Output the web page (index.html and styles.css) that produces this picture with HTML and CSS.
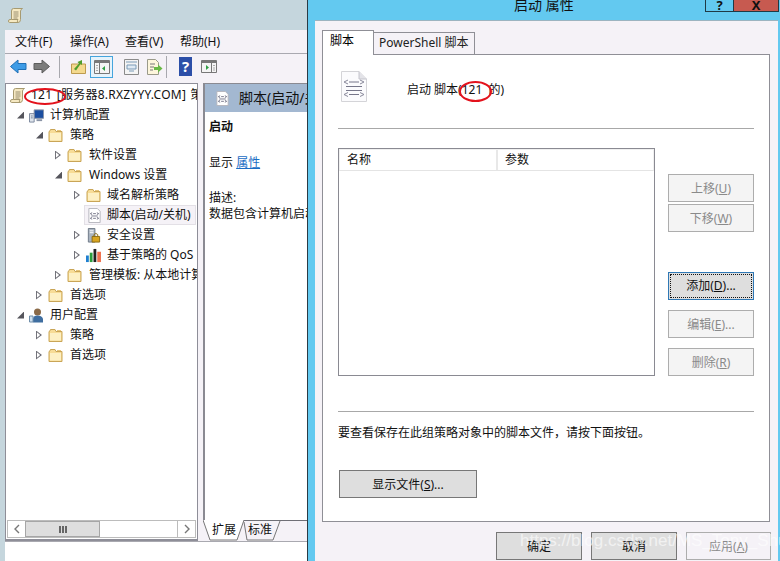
FILE: index.html
```html
<!DOCTYPE html>
<html lang="zh-CN">
<head>
    <meta charset="UTF-8">
    <title>启动 属性</title>
    <link rel="stylesheet" href="styles.css">
</head>
<body>
    <svg class="defs" width="0" height="0">
        <symbol id="folder" viewBox="0 0 15 15">
            <path d="M1 3.500V13.500H14V3.500H8L7 1.500H2.500L1.500 3.500Z" fill="#f7dc96" stroke="#c9a557"/>
            <path d="M2 5H13V12.500H2Z" fill="#fdf0c4"/>
            <path d="M9 2.500H13" stroke="#e6c67c"/>
        </symbol>
        <symbol id="scroll" viewBox="0 0 15 15">
            <path d="M3.500 3Q3.500 .5 5.500 .5H14.500Q13 1 12.500 3V11.500Q12.500 14.500 10 14.500H1.500Q.5 14.500 .5 13Q.5 11.500 2 11.500H3.500Z" fill="#f6e9c2" stroke="#a79a70"/>
            <path d="M5.500 4H10.500M5.500 6H10.500M5.500 8H10.500M5.500 10H9.500" stroke="#9a8f70"/>
            <path d="M3.500 11.500H10Q9 12.500 9.500 14.500" fill="none" stroke="#a79a70"/>
        </symbol>
        <symbol id="script" viewBox="0 0 15 16">
            <path d="M1.500 .5H10.500L13.500 3.500V15.500H1.500Z" fill="#fff" stroke="#b4b4bc"/>
            <path d="M5 5L3 6L5 7M10 5L12 6L10 7M5 10L3 11L5 12M10 10L12 11L10 12" fill="none" stroke="#77778a"/>
            <path d="M6 6H9M4 8.500H11M6 11H9" stroke="#77778a"/>
        </symbol>
    </svg>

    <div class="mmc">
        <div class="mmc-title">
            <svg class="ico-15"><use href="#scroll"/></svg>
        </div>
        <div class="mmc-body">
            <div class="menu">
                <span>文件(F)</span>
                <span>操作(A)</span>
                <span>查看(V)</span>
                <span>帮助(H)</span>
            </div>
            <div class="toolbar">
                <svg class="tool-arrow" width="17" height="15" viewBox="0 0 17 15"><path d="M.5 7.500L8 1V4.500H16V10.500H8V14Z" fill="#3d9be6" stroke="#1f6fb5"/></svg>
                <svg class="tool-arrow" width="17" height="15" viewBox="0 0 17 15"><path d="M16.500 7.500L9 1V4.500H1V10.500H9V14Z" fill="#7c7c7c" stroke="#5c5c5c"/></svg>
                <i class="tool-sep"></i>
                <svg class="tool-up" width="15" height="15" viewBox="0 0 15 15"><path d="M.5 5H14.500V14.500H.5Z" fill="#f4d98e" stroke="#bd9b4f"/><path d="M3 10L8 4.500L6.500 3L11 1V6L9.500 5L5 11.500Z" fill="#4f9e2c"/></svg>
                <span class="tool-on">
                    <svg width="16" height="14" viewBox="0 0 16 14"><path d="M.5 .5H15.500V13.500H.5Z" fill="#f4f4f4" stroke="#777"/><path d="M1 1H15V3H1Z" fill="#777"/><path d="M5.500 3V13" stroke="#777"/><path d="M2 5.500H4M2 8H4M2 10.500H4" stroke="#aaa"/><path d="M11 6V11L8 8.500Z" fill="#2f9e44"/></svg>
                </span>
                <svg class="tool-page" width="15" height="16" viewBox="0 0 15 16"><path d="M.5 .5H14.500V15.500H.5Z" fill="#f4f4f4" stroke="#8a8a8a"/><path d="M2 3H13M3 6H12V10H3ZM5 12H10" stroke="#7a9bb8" fill="#dfeaf4"/></svg>
                <svg class="tool-export" width="16" height="16" viewBox="0 0 16 16"><path d="M.5 .5H8.500L11.500 3.500V15.500H.5Z" fill="#fdf6dc" stroke="#9a9a8a"/><path d="M3 5H8M3 8H7M3 11H6" stroke="#777"/><path d="M7 8H11V5.500L15.500 9.500L11 13.500V11H7Z" fill="#69b945"/></svg>
                <i class="tool-sep"></i>
                <svg class="tool-help" width="13" height="19" viewBox="0 0 13 19"><path d="M0 0H13V19H0Z" fill="#2c4fa8"/><text x="6.500" y="15" class="help-mark">?</text></svg>
                <svg class="tool-pane" width="16" height="13" viewBox="0 0 16 13"><path d="M.5 .5H15.500V12.500H.5Z" fill="#f4f4f4" stroke="#777"/><path d="M1 1H15V3H1Z" fill="#777"/><path d="M10.500 3V12" stroke="#777"/><path d="M12 5.500H14M12 8H14M12 10H14" stroke="#aaa"/><path d="M5 5V10L8 7.500Z" fill="#2f9e44"/></svg>
            </div>
            <div class="panes">
                <div class="tree-wrap">
                    <div class="tree">
                        <div class="row root"><svg class="ico-15"><use href="#scroll"/></svg><span>121 [服务器8.RXZYYY.COM] 策略</span></div>
                        <div class="row l0"><i class="open"></i>
                            <svg class="ico-15" viewBox="0 0 16 15"><path d="M5.500 1.500H15.500V10.500H5.500Z" fill="#1c4fa0" stroke="#8a94a6"/><path d="M8 12.500H14" stroke="#8a94a6" stroke-width="2"/><path d="M.5 5.500H5.500V14.500H.5Z" fill="#dfe5ec" stroke="#78849a"/><path d="M2 8H4M2 10H4" stroke="#78849a"/></svg>
                            <span>计算机配置</span></div>
                        <div class="row l1"><i class="open"></i><svg class="ico-15"><use href="#folder"/></svg><span>策略</span></div>
                        <div class="row l2"><i class="shut"></i><svg class="ico-15"><use href="#folder"/></svg><span>软件设置</span></div>
                        <div class="row l2"><i class="open"></i><svg class="ico-15"><use href="#folder"/></svg><span>Windows 设置</span></div>
                        <div class="row l3"><i class="shut"></i><svg class="ico-15"><use href="#folder"/></svg><span>域名解析策略</span></div>
                        <div class="row l3"><i></i><div class="picked"><svg class="ico-15"><use href="#script"/></svg><span>脚本(启动/关机)</span></div></div>
                        <div class="row l3"><i class="shut"></i>
                            <svg class="ico-15" viewBox="0 0 15 16"><path d="M2 .5H9V15H2Z" fill="#aab4c0" stroke="#6d7785"/><path d="M3.500 3H7.500M3.500 5H7.500" stroke="#fff"/><path d="M6 9H14V15H6Z" fill="#d9a520" stroke="#8a6a10"/><path d="M8 9V7Q10 4.500 12 7V9" fill="none" stroke="#8a6a10"/></svg>
                            <span>安全设置</span></div>
                        <div class="row l3"><i class="shut"></i>
                            <svg class="ico-15" viewBox="0 0 16 16"><path d="M0 8H3V15H0Z" fill="#1f7fd0"/><path d="M4 5H7V15H4Z" fill="#2c9e3c"/><path d="M8 1H11V15H8Z" fill="#222"/><path d="M12 4H16V15H12Z" fill="#ef7350"/></svg>
                            <span>基于策略的 QoS</span></div>
                        <div class="row l2"><i class="shut"></i><svg class="ico-15"><use href="#folder"/></svg><span>管理模板: 从本地计算机</span></div>
                        <div class="row l1"><i class="shut"></i><svg class="ico-15"><use href="#folder"/></svg><span>首选项</span></div>
                        <div class="row l0"><i class="open"></i>
                            <svg class="ico-15" viewBox="0 0 15 15"><circle cx="8.500" cy="4" r="3.500" fill="#8a6a48"/><path d="M4 14.500V10.500Q4.500 7.500 8.500 7.500T14 10.500V14.500Z" fill="#3f6ea0"/><path d="M.5 8V14H4V8Z" fill="#cfe0ef" stroke="#6f8eaa"/></svg>
                            <span>用户配置</span></div>
                        <div class="row l1"><i class="shut"></i><svg class="ico-15"><use href="#folder"/></svg><span>策略</span></div>
                        <div class="row l1"><i class="shut"></i><svg class="ico-15"><use href="#folder"/></svg><span>首选项</span></div>
                    </div>
                    <div class="hscroll">
                        <span class="sb-btn">
                            <svg width="6" height="10" viewBox="0 0 6 10"><path d="M5 1L1 5L5 9" fill="none" stroke="#777" stroke-width="1.400"/></svg>
                        </span>
                        <span class="sb-thumb"><b></b><b></b><b></b></span>
                        <span class="sb-track"></span>
                        <span class="sb-btn">
                            <svg width="6" height="10" viewBox="0 0 6 10"><path d="M1 1L5 5L1 9" fill="none" stroke="#777" stroke-width="1.400"/></svg>
                        </span>
                    </div>
                </div>
                <div class="detail-wrap">
                    <div class="detail">
                        <div class="detail-head"><svg class="ico-15"><use href="#script"/></svg><span>脚本(启动/关机)</span></div>
                        <div class="detail-body">
                            <p class="strong">启动</p>
                            <p class="show">显示 <a>属性</a></p>
                            <p class="desc">描述:</p>
                            <p>数据包含计算机启动脚本</p>
                        </div>
                    </div>
                    <div class="view-tabs">
                        <svg class="view-shape" width="104" height="21" viewBox="0 0 104 21">
                            <path d="M41 .5H104" stroke="#6f6f76"/>
                            <path d="M41 2L44 20H70L77 1" fill="none" stroke="#777"/>
                            <path d="M0 0L7 20H34L41 0Z" fill="#fff"/>
                            <path d="M0 0L7 20H34L41 0" fill="none" stroke="#777"/>
                        </svg>
                        <span>扩展</span>
                        <span>标准</span>
                    </div>
                </div>
            </div>
            <div class="status"></div>
        </div>
    </div>

    <div class="dialog">
        <div class="dlg-title">
            <span class="dlg-name">启动 属性</span>
            <span class="cap-help">?</span>
            <span class="cap-close">X</span>
        </div>
        <div class="dlg-client">
            <div class="tabs">
                <span class="tab active">脚本</span>
                <span class="tab">PowerShell 脚本</span>
            </div>
            <div class="page">
                <div class="page-head">
                    <svg width="26" height="31" viewBox="0 0 26 31"><path d="M.5 .5H18L25.500 8V30.500H.5Z" fill="#fbfbfd" stroke="#d4d4d8"/><path d="M18 .5V8H25.500" fill="#e3e3e8" stroke="#c4c4cc"/><path d="M7 9L3 11L7 13M19 9L23 11L19 13M7 21.500L3 23.500L7 25.500M19 21.500L23 23.500L19 25.500" fill="none" stroke="#8a8a9c"/><path d="M8 11H18M5 15.500H21M5 19.500H21M8 23.500H18" stroke="#77778a"/></svg>
                    <span class="head-text">启动 脚本(121 &nbsp;的)</span>
                </div>
                <div class="rule"></div>
                <div class="page-main">
                    <div class="list">
                        <div class="list-head">
                            <span class="col-name">名称</span>
                            <span>参数</span>
                        </div>
                    </div>
                    <div class="side">
                        <button class="off">上移(<u>U</u>)</button>
                        <button class="off">下移(<u>W</u>)</button>
                        <button class="focus gap-add"><span>添加(<u>D</u>)...</span></button>
                        <button class="off gap-btn">编辑(<u>E</u>)...</button>
                        <button class="off gap-btn">删除(<u>R</u>)</button>
                    </div>
                </div>
                <div class="rule rule-low"></div>
                <p class="note">要查看保存在此组策略对象中的脚本文件，请按下面按钮。</p>
                <button class="show-files">显示文件(<u>S</u>)...</button>
            </div>
            <div class="dlg-foot">
                <button>确定</button>
                <button>取消</button>
                <button class="off">应用(<u>A</u>)</button>
            </div>
        </div>
    </div>

    <i class="ring ring-tree"></i>
    <i class="ring ring-head"></i>
    <span class="watermark">https://blog.csdn.net/MS_Tony_Shu</span>
</body>
</html>
```

FILE: styles.css
```css
* { box-sizing: border-box; }
html, body { margin: 0; height: 100%; }
body { position: relative; width: 780px; height: 561px; overflow: hidden; background: #c5d6dd; color: #111; font: 12px/20px "Noto Sans", "Noto Sans CJK SC", sans-serif; }
p { margin: 0; }
i { display: block; font-style: normal; }
.defs { position: absolute; }
.ico-15 { width: 15px; height: 15px; flex: none; }

.mmc { position: absolute; left: 0; top: 0; width: 308px; height: 561px; border-right: 1px solid #2b3a44; display: flex; flex-direction: column; }
.mmc-title { height: 30px; flex: none; padding: 8px 0 0 8px; }
.mmc-body { flex: 1; margin-left: 5px; display: flex; flex-direction: column; background: #f5f2f7; min-height: 0; }

.menu { height: 24px; flex: none; display: flex; padding-left: 10px; align-items: center; border-bottom: 1px solid #a9a9b0; }
.menu span { width: 55px; }

.toolbar { height: 29px; flex: none; display: flex; align-items: center; padding: 0 0 4px 5px; }
.tool-arrow { margin-right: 6px; }
.tool-sep { width: 1px; height: 22px; background: #a8a8ae; margin-left: 3px; }
.tool-up { margin-left: 11px; }
.tool-on { width: 23px; height: 22px; margin-left: 4px; display: flex; align-items: center; justify-content: center; background: #e6f3fb; border: 1px solid #45a5dd; }
.tool-page { margin-left: 11px; }
.tool-export { margin-left: 8px; }
.tool-help { margin-left: 12px; }
.tool-pane { margin-left: 9px; }
.help-mark { fill: #fff; font-size: 15px; font-weight: bold; text-anchor: middle; }

.panes { flex: 1; display: flex; min-height: 0; }
.tree-wrap { width: 193px; flex: none; background: #fff; border: 1px solid #8e8e98; border-bottom-width: 2px; display: flex; flex-direction: column; }
.tree { flex: 1; padding-top: 1px; overflow: hidden; }
.row { height: 20px; display: flex; align-items: center; white-space: nowrap; overflow: hidden; }
.row i { width: 9px; height: 9px; flex: none; margin-right: 3px; }
.row svg { margin-right: 7px; }
.row i.open { width: 7px; height: 7px; margin-right: 5px; }
.row i.shut { width: 6px; margin-right: 6px; }
.row.root { padding-left: 4px; word-spacing: 1px; letter-spacing: .25px; }
.row.root svg { margin-right: 6px; }
.row.l0 { padding-left: 11px; }
.row.l0 svg { margin-right: 6px; }
.row.l1 { padding-left: 30px; }
.row.l2 { padding-left: 49px; }
.row.l3 { padding-left: 68px; }
.row.l3 svg { margin-right: 6px; }
.open { background: #55555c; clip-path: polygon(100% 0, 100% 100%, 0 100%); }
.shut { position: relative; background: #6c6c74; clip-path: polygon(0 0, 100% 50%, 0 100%); }
.shut::after { content: ""; position: absolute; inset: 0; background: #fff; clip-path: polygon(16% 20%, 70% 50%, 16% 80%); }
.row .picked svg { margin-right: 5px; }
.picked { display: flex; align-items: center; height: 20px; width: 112px; margin-left: -2px; padding-left: 2px; background: #f5f2f7; border: 1px solid #e3e0e6; }

.hscroll { height: 18px; flex: none; margin: 0 1px 1px; display: flex; border: 1px solid #bcbcbc; }
.sb-btn { width: 17px; display: flex; align-items: center; justify-content: center; }
.sb-thumb { width: 75px; display: flex; align-items: center; justify-content: center; gap: 1px; background: #dedede; border: 1px solid #a6a6a6; }
.sb-thumb b { width: 2px; height: 7px; background: #666; }
.sb-track { flex: 1; border-right: 1px solid #bcbcbc; }

.detail-wrap { flex: 1; min-width: 0; padding-left: 5px; display: flex; flex-direction: column; }
.detail { flex: 1; overflow: hidden; background: #fff; border-left: 2px solid #8a8a92; border-top: 1px solid #8a8a92; }
.detail-head { height: 28px; display: flex; align-items: center; padding-left: 10px; background: #a3b8d1; font-size: 14px; white-space: nowrap; }
.detail-head span { margin-left: 9px; }
.detail-body { padding: 7px 0 0 4px; white-space: nowrap; line-height: 16px; }
.strong { font-weight: bold; }
.show { margin-top: 20px; }
.show a { color: #1a6dc4; text-decoration: underline; }
.desc { margin-top: 19px; }
.view-tabs { position: relative; height: 21px; flex: none; display: flex; gap: 12px; padding-left: 9px; }
.view-tabs span { position: relative; }
.view-shape { position: absolute; left: 0; top: 0; }
.status { height: 20px; flex: none; background: #fff; border-top: 1px solid #a9a9b0; }

.dialog { position: absolute; left: 308px; top: 0; width: 472px; height: 561px; background: #63c9f0; }
.dlg-title { height: 20px; position: relative; display: flex; justify-content: flex-end; padding-right: 1px; }
.dlg-name { position: absolute; left: 206px; top: -5px; font-size: 14px; }
.cap-help, .cap-close { height: 12px; display: flex; align-items: flex-end; justify-content: center; line-height: 12px; font-weight: bold; border: 1px solid #1f3a46; border-top: 0; }
.cap-help { width: 29px; font-size: 13px; }
.cap-close { width: 46px; margin-left: -1px; background: #c75a50; font-size: 13px; }
.dlg-client { height: 541px; margin: 0 2px 0 7px; background: #f5f2f7; border-top: 1px solid #9cb4c0; padding: 9px 8px 0 7px; }

.tabs { height: 24px; display: flex; align-items: flex-end; }
.tab { height: 22px; padding: 0 5px; border: 1px solid #8f8f96; border-bottom: 0; line-height: 20px; background: #f5f2f7; color: #222; margin-left: -1px; }
.tab.active { position: relative; z-index: 1; margin: 0 0 -1px; width: 52px; height: 25px; padding: 0 7px; background: #fff; color: #000; }
.page { height: 468px; background: #fff; border: 1px solid #8f8f96; padding: 0 15px; }
.page-head { height: 73px; display: flex; align-items: flex-start; padding: 16px 0 0 3px; }
.head-text { margin: 9px 0 0 40px; }
.rule { height: 1px; background: #a8a8a8; }
.rule-low { margin-top: 35px; }
.page-main { display: flex; margin-top: 19px; }
.list { width: 317px; height: 228px; border: 1px solid #8a8a92; }
.list-head { height: 22px; display: flex; align-items: center; padding-left: 7px; border: 1px solid #f0f0f0; border-bottom-color: #e4e4e4; }
.col-name { width: 151px; height: 100%; border-right: 2px solid #e8e8e8; margin-right: 7px; }
.side { width: 86px; margin-left: 13px; padding-top: 26px; display: flex; flex-direction: column; }

button { display: block; width: 86px; height: 28px; padding: 1px 0 0; font: inherit; color: #111; background: #dedede; border: 1px solid #777; }
button.off { color: #8a8a8a; background: #f4f4f4; border-color: #adadad; }
.side button + button { margin-top: 2px; }
.side .gap-add { margin-top: 40px; }
.side .gap-btn { margin-top: 10px; }
.focus { border-color: #2f78b5; padding: 1px; }
.focus span { display: block; height: 100%; line-height: 22px; border: 1px dotted #111; }

.note { margin-top: 11px; }
.show-files { width: 138px; margin: 27px 0 0 1px; }
.dlg-foot { display: flex; justify-content: flex-end; gap: 9px; margin: 10px -1px 0 0; }
.dlg-foot button:last-child { width: 85px; }
.dlg-foot button.off { background: #f5f2f7; }

.ring { position: absolute; border: 2px solid #e3121c; border-radius: 50%; }
.ring-tree { left: 24px; top: 88px; width: 42px; height: 17px; }
.ring-head { left: 459px; top: 81px; width: 33px; height: 21px; }
.watermark { position: absolute; left: 520px; top: 531px; font: 17px/20px "Liberation Sans", sans-serif; color: rgba(255, 255, 255, 0.62); white-space: nowrap; }
```
